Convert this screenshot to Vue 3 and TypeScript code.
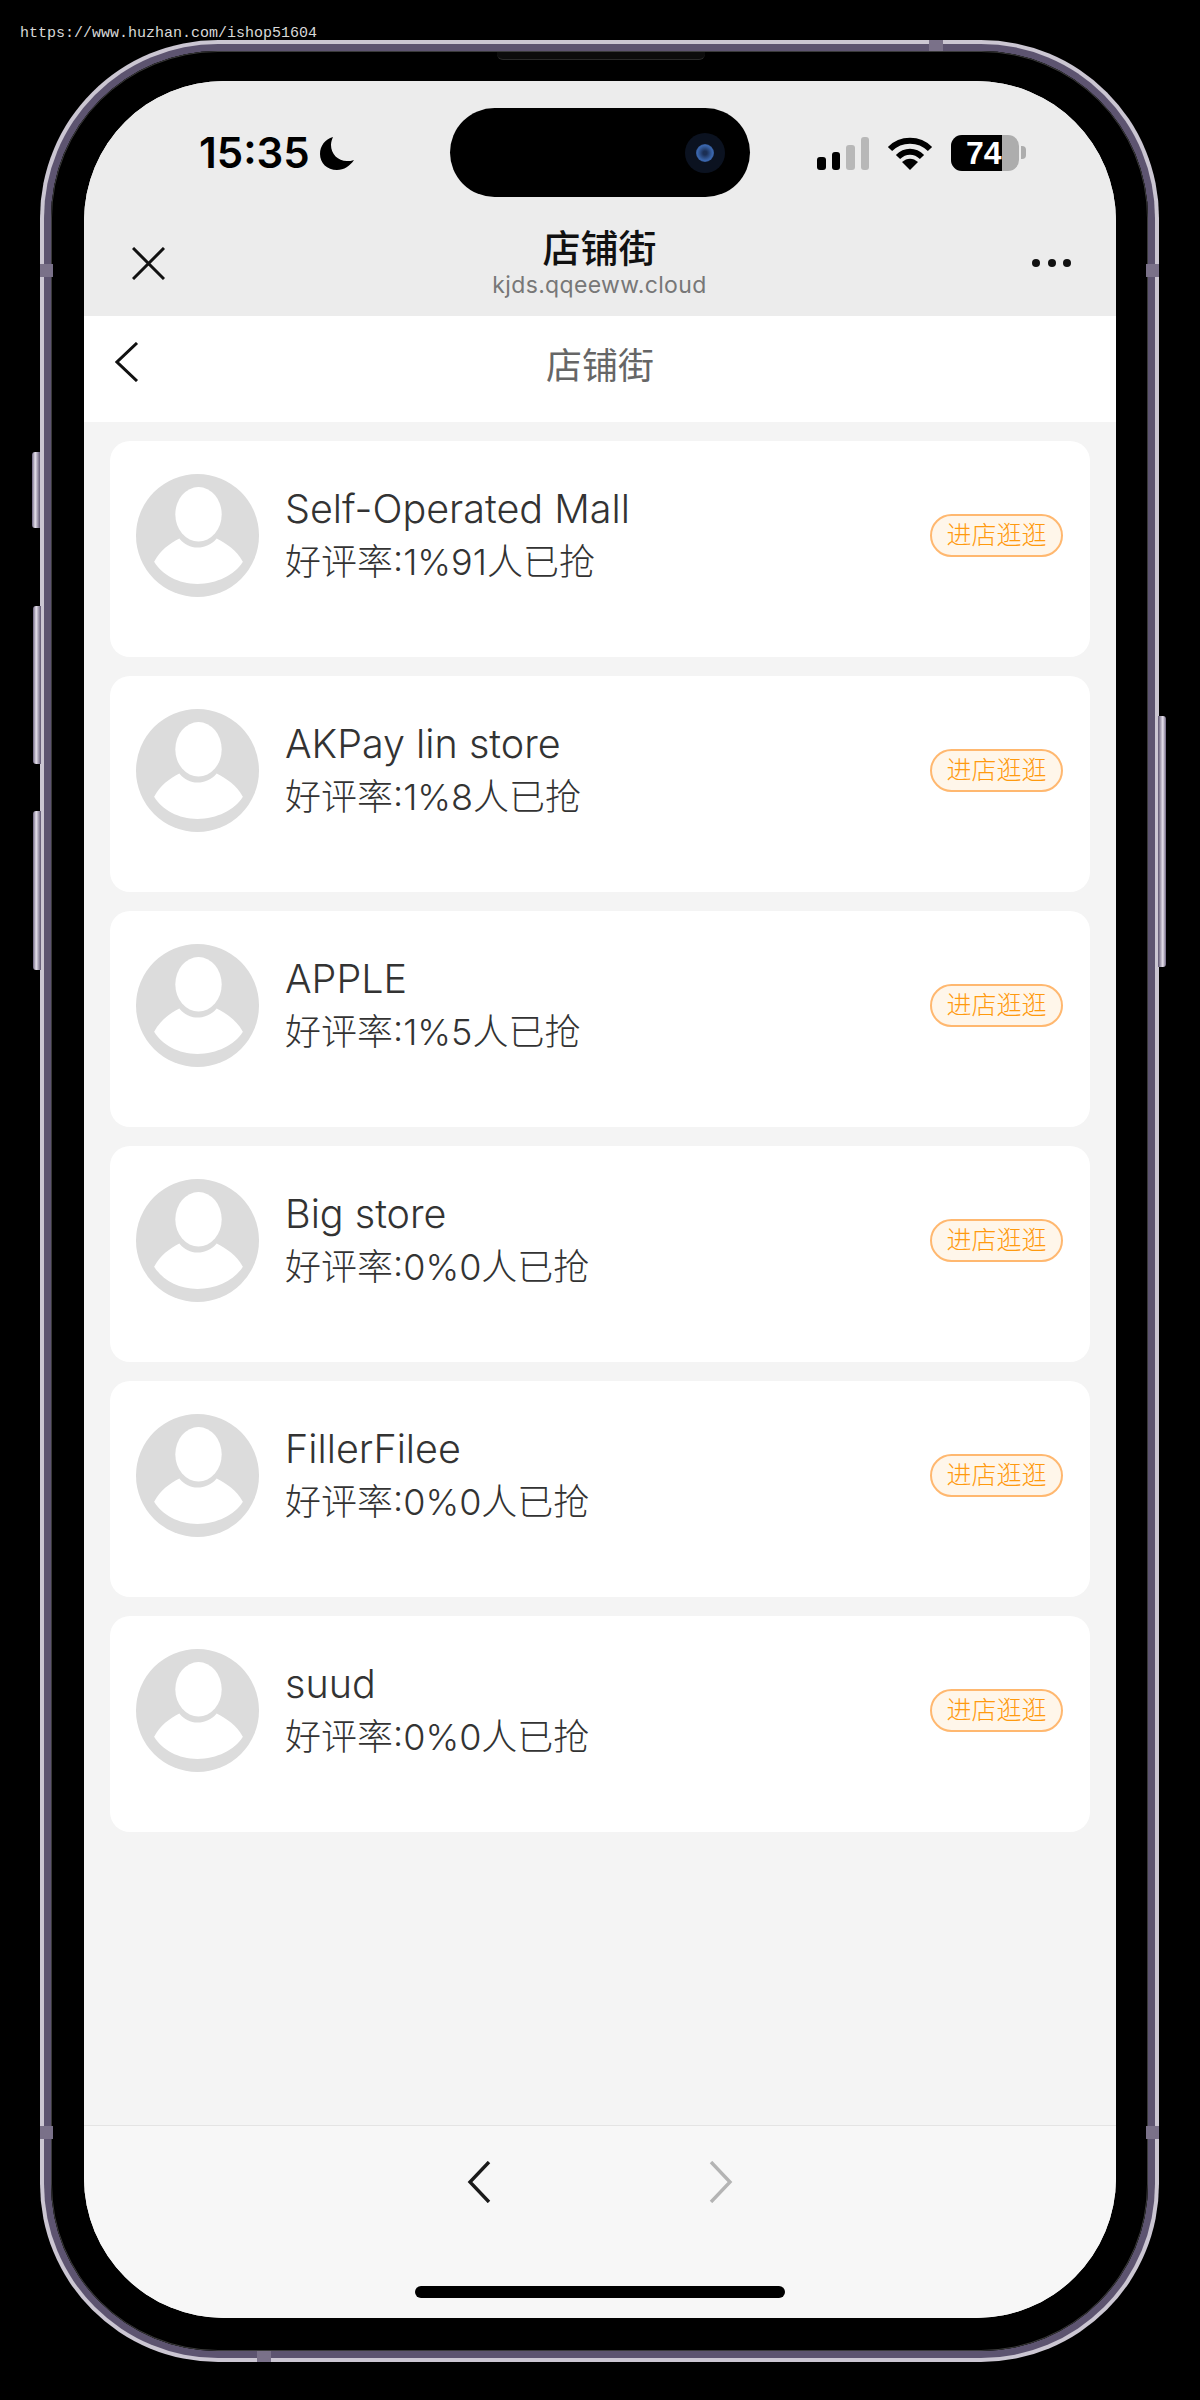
<script setup lang="ts">
type Shop = { name: string; rate: string; sold: number }

const shops: Shop[] = [
  { name: 'Self-Operated Mall', rate: '1%', sold: 91 },
  { name: 'AKPay lin store', rate: '1%', sold: 8 },
  { name: 'APPLE', rate: '1%', sold: 5 },
  { name: 'Big store', rate: '0%', sold: 0 },
  { name: 'FillerFilee', rate: '0%', sold: 0 },
  { name: 'suud', rate: '0%', sold: 0 }
]
</script>

<template>
  <div class="page">
    <div class="watermark">https://www.huzhan.com/ishop51604</div>

    <div class="phone">
      <!-- side buttons -->
      <i class="side-btn mute"></i>
      <i class="side-btn vol-up"></i>
      <i class="side-btn vol-down"></i>
      <i class="side-btn power"></i>
      <!-- antenna bands -->
      <i class="band-mark v l1"></i>
      <i class="band-mark v l2"></i>
      <i class="band-mark v r1"></i>
      <i class="band-mark v r2"></i>
      <i class="band-mark h t1"></i>
      <i class="band-mark h b1"></i>

      <div class="band">
        <div class="bezel">
          <i class="speaker"></i>
          <div class="screen">
            <header class="top-gray">
              <div class="status">
                <div class="status-left">
                  <span class="time">15:35</span>
                  <svg class="moon" width="34" height="34" viewBox="0 0 34 34">
                    <path d="M13 1C5 3 0 10 0 18C0 27 7 34 17 34C24 34 30 30 34 24C32 25 29 25 27 25C18 25 11 18 11 9C11 6 12 3 13 1Z" fill="#000" />
                  </svg>
                </div>
                <div class="island">
                  <span class="camera"><span class="lens"></span></span>
                </div>
                <div class="status-right">
                  <div class="signal">
                    <span class="b1"></span>
                    <span class="b2"></span>
                    <span class="b3"></span>
                    <span class="b4"></span>
                  </div>
                  <svg class="wifi" width="46" height="34" viewBox="0 0 46 34">
                    <path d="M3 13C14 2 32 2 43 13" fill="none" stroke="#000" stroke-width="6" />
                    <path d="M11 21C18 14 28 14 35 21" fill="none" stroke="#000" stroke-width="6" />
                    <path d="M23 34L15 26C20 21.5 26 21.5 31 26Z" fill="#000" />
                  </svg>
                  <div class="battery">
                    <div class="cell">
                      <div class="level">74</div>
                      <div class="rest"></div>
                    </div>
                    <span class="cap"></span>
                  </div>
                </div>
              </div>

              <div class="nav">
                <svg class="close" width="33" height="33" viewBox="0 0 33 33">
                  <path d="M1 1L32 32M32 1L1 32" stroke="#111" stroke-width="3" fill="none" />
                </svg>
                <div class="nav-title">
                  <div class="title">店铺街</div>
                  <div class="domain">kjds.qqeeww.cloud</div>
                </div>
                <div class="dots"><span></span><span></span><span></span></div>
              </div>
            </header>

            <div class="page-head">
              <svg class="head-back" width="24" height="40" viewBox="0 0 24 40">
                <path d="M22 1L2 20L22 39" stroke="#111" stroke-width="3" fill="none" />
              </svg>
              <h1 class="head-title">店铺街</h1>
            </div>

            <section class="list">
              <article v-for="shop in shops" :key="shop.name" class="card">
                <svg class="avatar" width="123" height="123" viewBox="0 0 122 122">
                  <circle cx="61" cy="61" r="61" fill="#dcdcdc" />
                  <ellipse cx="62" cy="40" rx="23" ry="27" fill="#fff" />
                  <path d="M18 87C24 76 33 69 43 64C48 70 54 73 61 73C68 73 75 70 80 64C90 69 100 76 106 87C98 100 80 109 61 109C42 109 26 100 18 87Z" fill="#fff" />
                </svg>
                <div class="info">
                  <div class="name">{{ shop.name }}</div>
                  <div class="meta">好评率:{{ shop.rate }}{{ shop.sold }}人已抢</div>
                </div>
                <button class="enter" type="button">进店逛逛</button>
              </article>
            </section>

            <footer class="toolbar">
              <div class="arrows">
                <svg width="24" height="42" viewBox="0 0 24 42">
                  <path d="M22 1L3 21L22 41" stroke="#1a1a1a" stroke-width="3.4" fill="none" />
                </svg>
                <svg width="24" height="42" viewBox="0 0 24 42">
                  <path d="M2 1L21 21L2 41" stroke="#b4b4b4" stroke-width="3.4" fill="none" />
                </svg>
              </div>
              <div class="home-bar"></div>
            </footer>
          </div>
        </div>
      </div>
    </div>
  </div>
</template>

<style>
html,
body {
  background: #000;
}
</style>

<style scoped>
.page {
  position: relative;
  width: 1200px;
  height: 2400px;
  padding: 40px 41px 38px 40px;
  box-sizing: border-box;
  background: #000;
  font-family: Inter, "Noto Sans CJK SC", sans-serif;
}

.watermark {
  position: absolute;
  left: 20px;
  top: 25px;
  z-index: 5;
  font: 15px/18px "Liberation Mono", monospace;
  color: #d8d8d8;
}

/* 机身 */
.phone {
  position: relative;
  height: 100%;
  padding: 4px;
  box-sizing: border-box;
  border-radius: 178px;
  background: #cbc6d2;
}

.band {
  height: 100%;
  padding: 7px;
  box-sizing: border-box;
  border-radius: 174px;
  background: #5d5470;
}

.bezel {
  position: relative;
  height: 100%;
  padding: 30px 32px 33px 33px;
  box-sizing: border-box;
  border-radius: 167px;
  background: #000;
  box-shadow: inset 0 0 0 1px #3a3a3a, inset 0 0 0 2px #000;
}

.speaker {
  position: absolute;
  left: 446px;
  top: 1px;
  width: 208px;
  height: 7px;
  background: #0c0c0c;
  border-bottom: 1px solid #2a2a2a;
  border-radius: 0 0 6px 6px;
}

.side-btn {
  position: absolute;
  width: 8px;
  border-radius: 3px 0 0 3px;
  background: linear-gradient(90deg, #6d6480, #e6e1ec 40%, #5d5470);
}

.mute { left: -8px; top: 412px; height: 76px; }
.vol-up { left: -7px; top: 566px; height: 158px; }
.vol-down { left: -7px; top: 771px; height: 159px; }
.power { right: -7px; top: 676px; height: 251px; transform: scaleX(-1); }

.band-mark {
  position: absolute;
  background: #7a7189;
  z-index: 1;
}

.band-mark.v { width: 13px; height: 13px; }
.band-mark.h { width: 14px; height: 11px; }
.l1 { left: 0; top: 224px; }
.l2 { left: 0; top: 2086px; }
.r1 { right: 0; top: 224px; }
.r2 { right: 0; top: 2086px; }
.t1 { left: 889px; top: 0; }
.b1 { left: 217px; bottom: 0; }

/* 屏幕 */
.screen {
  display: flex;
  flex-direction: column;
  height: 100%;
  overflow: hidden;
  border-radius: 140px;
  background: #f4f4f4;
}

.top-gray {
  background: #ececec;
  padding-top: 27px;
}

.status {
  display: grid;
  grid-template-columns: 1fr 300px 1fr;
  height: 89px;
  align-items: center;
}

.status-left {
  display: flex;
  align-items: center;
  padding-left: 115px;
  color: #000;
}

.time {
  font-size: 42px;
  font-weight: 600;
  line-height: 1;
}

.moon {
  margin-left: 10px;
}

.island {
  position: relative;
  display: flex;
  justify-content: flex-end;
  align-items: center;
  height: 89px;
  padding-right: 25px;
  box-sizing: border-box;
  border-radius: 45px;
  background: #000;
}

.camera {
  display: flex;
  align-items: center;
  justify-content: center;
  width: 40px;
  height: 40px;
  border-radius: 50%;
  background: #0b1220;
}

.lens {
  width: 18px;
  height: 18px;
  border-radius: 50%;
  background: radial-gradient(circle at 50% 50%, #1b2f55 15%, #3a66ad 60%, #1a2c50 100%);
}

.status-right {
  display: flex;
  align-items: center;
  padding-left: 67px;
}

.signal {
  display: flex;
  align-items: flex-end;
  gap: 6px;
  height: 34px;
}

.signal span {
  width: 8.5px;
  border-radius: 3px;
  background: #000;
}

.signal .b1 { height: 13px; }
.signal .b2 { height: 18px; }
.signal .b3 { height: 25px; background: #b8b8b8; }
.signal .b4 { height: 33px; background: #b8b8b8; }

.wifi {
  margin-left: 18px;
}

.battery {
  display: flex;
  align-items: center;
  margin-left: 18px;
}

.cell {
  display: flex;
  width: 68px;
  height: 36px;
  overflow: hidden;
  border-radius: 11px;
  background: #adadad;
}

.level {
  width: 51px;
  padding-left: 15px;
  box-sizing: border-box;
  background: #000;
  color: #fff;
  font: 700 32px/36px "Liberation Sans", sans-serif;
  overflow: hidden;
  white-space: nowrap;
}

.cap {
  width: 5px;
  height: 13px;
  margin-left: 2px;
  border-radius: 0 4px 4px 0;
  background: #adadad;
}

.nav {
  display: grid;
  grid-template-columns: 1fr auto 1fr;
  align-items: center;
  height: 119px;
  padding: 0 45px 0 48px;
}

.close {
  margin-top: 13px;
}

.nav-title {
  text-align: center;
  margin: 9px 2px 0 -2px;
}

.title {
  font-size: 38px;
  line-height: 48px;
  font-weight: 500;
  color: #111;
}

.domain {
  font-size: 23px;
  line-height: 26px;
  letter-spacing: 0.35px;
  color: #777;
}

.dots {
  display: flex;
  justify-content: flex-end;
  gap: 7.5px;
  margin-top: 13px;
}

.dots span {
  width: 8px;
  height: 8px;
  border-radius: 50%;
  background: #111;
}

.page-head {
  position: relative;
  display: flex;
  align-items: center;
  justify-content: center;
  height: 106px;
  padding-bottom: 6px;
  box-sizing: border-box;
  background: #fff;
}

.head-back {
  position: absolute;
  left: 31px;
  top: 26px;
}

.head-title {
  margin: 0;
  font-size: 36px;
  font-weight: 400;
  line-height: 44px;
  color: #666;
}

.list {
  flex: 1;
  display: flex;
  flex-direction: column;
  gap: 19px;
  padding: 19px 26px 0;
}

.card {
  display: flex;
  height: 216px;
  padding: 33px 27px 0 26px;
  box-sizing: border-box;
  border-radius: 20px;
  background: #fff;
}

.avatar {
  flex: none;
}

.info {
  flex: 1;
  margin-left: 26px;
  padding-top: 9px;
  color: #333;
  font-size: 36px;
  line-height: 53px;
  font-weight: 300;
  white-space: nowrap;
}

.name {
  font-size: 39.5px;
}

.enter {
  align-self: flex-start;
  width: 133px;
  height: 43px;
  margin-top: 40px;
  padding: 0;
  border: 2px solid #ffb870;
  border-radius: 22px;
  background: #fff6ea;
  color: #ff9a0f;
  font-family: inherit;
  font-size: 25px;
  font-weight: 300;
  line-height: 1;
}

.toolbar {
  height: 193px;
  padding-top: 35px;
  box-sizing: border-box;
  border-top: 1px solid #e4e4e4;
  background: #f7f7f7;
}

.arrows {
  display: flex;
  justify-content: center;
  gap: 218px;
}

.home-bar {
  width: 370px;
  height: 12px;
  margin: 83px auto 0;
  border-radius: 6px;
  background: #000;
}
</style>
